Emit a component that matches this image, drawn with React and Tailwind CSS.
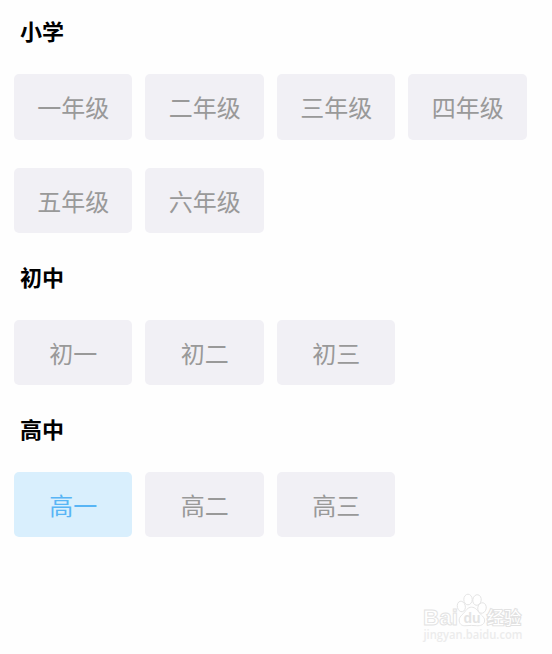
import { useState } from 'react'

const sections = [
  { title: '小学', grades: ['一年级', '二年级', '三年级', '四年级', '五年级', '六年级'] },
  { title: '初中', grades: ['初一', '初二', '初三'] },
  { title: '高中', grades: ['高一', '高二', '高三'] },
]

function GradeButton({ label, active, onClick }) {
  return (
    <button
      onClick={onClick}
      className={
        active
          ? 'h-[65.5px] rounded-[5px] bg-[#d9effd] pt-px pl-px text-2xl leading-none text-[#58b5f5]'
          : 'h-[65.5px] rounded-[5px] bg-[#f1f0f5] pt-px pl-px text-2xl leading-none text-[#999999]'
      }
    >
      {label}
    </button>
  )
}

function Watermark() {
  return (
    <svg
      className="pointer-events-none absolute top-[590px] left-[418px]"
      width="112"
      height="60"
      viewBox="0 0 112 60"
      fill="#ffffff"
      stroke="#e2e2e2"
      strokeWidth="0.9"
    >
      <text x="5" y="35" fontSize="22.5" fontWeight="700" fontFamily="Liberation Sans, sans-serif" textLength="35" lengthAdjust="spacingAndGlyphs">Bai</text>
      {/* paw */}
      <ellipse cx="43.3" cy="16.5" rx="4" ry="5.3" transform="rotate(-12 43.3 16.5)" />
      <ellipse cx="50" cy="9.5" rx="4.2" ry="5.3" />
      <ellipse cx="59" cy="10" rx="4.2" ry="5.3" transform="rotate(10 59 10)" />
      <ellipse cx="64" cy="18" rx="4.2" ry="5.3" transform="rotate(12 64 18)" />
      <path d="M53.500 17.200c-4 0-5.500 3.500-8 6.200-2.800 2.700-4.800 4.200-4.300 7.600.5 3.900 3.500 5 6.800 4.700 3.800-.4 7.200-.4 10.500 0 3.700.4 7.700-1 8.100-4.600.4-3.600-2.500-5-4.800-7.700-2.300-2.600-4.100-6.200-8.300-6.200z" />
      <text x="45.5" y="33" fontSize="14" fontWeight="700" fontFamily="Liberation Sans, sans-serif" fill="#e4e4e4" stroke="none">du</text>
      <text x="69" y="33.5" fontSize="17" fontWeight="400" fontFamily="Noto Sans CJK SC, sans-serif" strokeWidth="2.2" paintOrder="stroke">经验</text>
      <text x="5.5" y="48.5" fontSize="12" fontWeight="600" fontFamily="Open Sans, sans-serif" textLength="99" lengthAdjust="spacingAndGlyphs" fill="#ececec" stroke="none">jingyan.baidu.com</text>
    </svg>
  )
}

export default function App() {
  const [selected, setSelected] = useState('高一')

  return (
    <div className="relative h-[654px] w-[552px] overflow-hidden bg-[#fefefe] font-['Noto_Sans_CJK_SC',sans-serif]">
      <main className="flex flex-col gap-[22.5px] pt-2.5 pr-[25.5px] pl-[13.6px]">
        {sections.map(section => (
          <section key={section.title}>
            <h2 className="h-16 pl-[6.5px] text-[22px] leading-[40px] font-bold text-black">{section.title}</h2>
            <div className="grid grid-cols-4 gap-x-[13px] gap-y-[28px]">
              {section.grades.map(grade => (
                <GradeButton
                  key={grade}
                  label={grade}
                  active={grade === selected}
                  onClick={() => setSelected(grade)}
                />
              ))}
            </div>
          </section>
        ))}
      </main>
      <Watermark />
    </div>
  )
}
